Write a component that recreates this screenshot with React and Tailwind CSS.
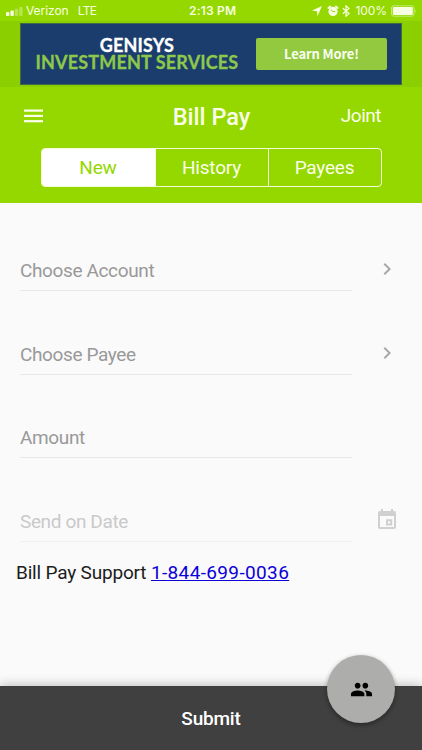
import React from 'react';
import { MdChevronRight, MdPeople } from 'react-icons/md';

const tabs = ['New', 'History', 'Payees'];

const StatusBar = () => (
  <div className="flex h-[21px] items-center pl-[6px] pr-[5px] font-['Inter',sans-serif] text-[12px] leading-[21px] text-[#f8ffe0]">
    <div className="flex w-[183px] items-center">
      <svg width="17" height="10" viewBox="0 0 17 10" fill="currentColor" className="mt-[3px] shrink-0">
        <rect x="0" y="5" width="3.4" height="4" rx="1" />
        <rect x="4.4" y="3.5" width="3.4" height="5.5" rx="1" />
        <rect x="8.8" y="1.8" width="3.4" height="7.2" rx="1" opacity=".35" />
        <rect x="13.2" y="0" width="3.4" height="9" rx="1" opacity=".35" />
      </svg>
      <span className="ml-[3px] tracking-[-0.05px]">Verizon</span>
      <span className="ml-[9px] tracking-[-0.6px]">LTE</span>
    </div>
    <span className="whitespace-nowrap font-semibold tracking-[0.2px]">2:13 PM</span>
    <div className="ml-auto flex items-center">
      <svg width="10" height="10" viewBox="0 0 10 10" fill="currentColor">
        <path d="M10 0 L5.6 10 L4.8 5.2 L0 4.5 Z" />
      </svg>
      <svg width="12" height="12" viewBox="0 0 12 12" fill="none" stroke="currentColor" className="ml-[5px]">
        <circle cx="6" cy="6.4" r="4.6" fill="currentColor" stroke="none" />
        <path d="M1.4 3 L3.2 1.5 M10.6 3 L8.8 1.5" strokeWidth="1.8" strokeLinecap="round" />
        <path d="M4 4.8 L6 6.6 L8.3 6.6" stroke="#94d800" strokeWidth="1" />
      </svg>
      <svg width="8" height="12" viewBox="0 0 8 12" fill="none" stroke="currentColor" strokeWidth="1.2" className="ml-[3px]">
        <path d="M0.8 3.3 L7 8.6 L4 11.2 V0.8 L7 3.4 L0.8 8.7" />
      </svg>
      <span className="ml-[6px] tracking-[-0.1px]">100%</span>
      <svg width="26" height="12" viewBox="0 0 26 12" fill="currentColor" className="ml-[4px]">
        <rect x=".5" y=".8" width="22.6" height="10.4" rx="2.2" fill="none" stroke="currentColor" opacity=".5" />
        <rect x="1.8" y="2.1" width="20" height="7.8" rx="1" />
        <path d="M24.3 4.2 Q26.3 6 24.3 7.8 Z" opacity=".4" />
      </svg>
    </div>
  </div>
);

const Banner = () => (
  <div className="flex h-[66px] justify-center bg-[#8ccf00] pt-[2px]">
    <div className="flex h-[62px] w-[382px] items-start border border-[#3e6a45] bg-[#1b3d6d]">
      <div className="ml-[11px] mt-[13px] flex w-[210px] flex-col items-center font-['Lato',sans-serif] text-[18px] font-bold [-webkit-text-stroke:0.3px]">
        <span className="block h-[17px] whitespace-nowrap leading-[17px] tracking-[0.15px] text-white">GENISYS</span>
        <span className="block h-[17px] whitespace-nowrap leading-[17px] tracking-[0.15px] text-[#8dc84b]">INVESTMENT SERVICES</span>
      </div>
      <button className="ml-[14px] mt-[14px] h-[32px] w-[131px] rounded-[2px] bg-[#93c93f] font-['Noto_Sans_CJK_SC',sans-serif] text-[13px] font-bold leading-[30px] tracking-[-0.15px] text-[#f8fff0]">
        Learn More!
      </button>
    </div>
  </div>
);

const MenuIcon = () => (
  <svg width="19" height="14" viewBox="0 0 19 14" fill="currentColor" className="-mt-px">
    <rect y="0.5" width="19" height="2.2" />
    <rect y="5.8" width="19" height="2.2" />
    <rect y="11.1" width="19" height="2.2" />
  </svg>
);

const EventIcon = () => (
  <svg width="24" height="24" viewBox="0 0 24 24" fill="currentColor">
    <path
      fillRule="evenodd"
      d="M19 3h-1V1h-2v2H8V1H6v2H5a2 2 0 0 0-2 2v14a2 2 0 0 0 2 2h14a2 2 0 0 0 2-2V5a2 2 0 0 0-2-2zM5 8h14v11H5z"
    />
    <path fillRule="evenodd" d="M11 11.2h6.2v6.2H11zM13 13.2h2.2v2.2H13z" />
  </svg>
);

const Field = ({ label, icon, disabled }) => (
  <div className={`flex h-[83.5px] items-start ${disabled ? 'opacity-50' : ''}`}>
    <div className="h-[41px] w-[332px] border-b border-[#e8e8e8] text-[19px] leading-[41px] tracking-[-0.37px] text-[#999]">
      {label}
    </div>
    <div className="ml-[23px] mt-[7px] text-[#a8a8a8]">{icon}</div>
  </div>
);

const App = () => {
  return (
    <div className="flex h-[750px] w-[422px] flex-col overflow-hidden bg-[#fafafa] font-['Roboto',sans-serif]">
      <header className="h-[203px] shrink-0 bg-[#94d800] text-[#fbffe9]">
        <StatusBar />
        <Banner />
        <div className="grid h-[58px] grid-cols-[1fr_auto_1fr] items-center pl-[24px] pr-[23px]">
          <MenuIcon />
          <h1 className="pt-[3px] text-[23.5px] font-medium">Bill Pay</h1>
          <span className="pr-[18px] pt-px text-right text-[19px] tracking-[-0.5px]">Joint</span>
        </div>
        <div className="mx-auto mt-[3px] grid h-[39px] w-[341px] grid-cols-[113px_113px_113px] overflow-hidden rounded-[4px] border border-[#f5ffd5] text-[19px] tracking-[-0.2px]">
          {tabs.map((tab, i) => (
            <button
              key={tab}
              className={i === 0 ? 'bg-white pt-[2px] text-[#94d800]' : 'border-l border-[#f5ffd5] pt-[2px]'}
            >
              {tab}
            </button>
          ))}
        </div>
      </header>

      <main className="flex-1 pl-[20px] pt-[47px]">
        <Field label="Choose Account" icon={<MdChevronRight size={24} />} />
        <Field label="Choose Payee" icon={<MdChevronRight size={24} />} />
        <Field label="Amount" />
        <Field label="Send on Date" icon={<EventIcon />} disabled />
        <p className="-ml-[4px] -mt-[26px] text-[19px] leading-[30px] tracking-[-0.18px] text-[#1c1c1c]">
          Bill Pay Support{' '}
          <a href="tel:1-844-699-0036" className="tracking-[0.36px] text-[#0b00d8] underline">
            1-844-699-0036
          </a>
        </p>
      </main>

      <footer className="relative h-[64px] shrink-0 bg-[#404040] shadow-[0_-1px_10px_rgba(0,0,0,0.25)]">
        <button className="h-full w-full pt-[2px] text-[19px] font-medium tracking-[-0.2px] text-white">Submit</button>
        <button className="absolute -top-[31px] left-[327px] flex h-[68px] w-[68px] items-center justify-center rounded-full bg-[#adadab] text-black shadow-[0_2px_5px_rgba(0,0,0,0.4)]">
          <MdPeople size={23} />
        </button>
      </footer>
    </div>
  );
};

export default App;
